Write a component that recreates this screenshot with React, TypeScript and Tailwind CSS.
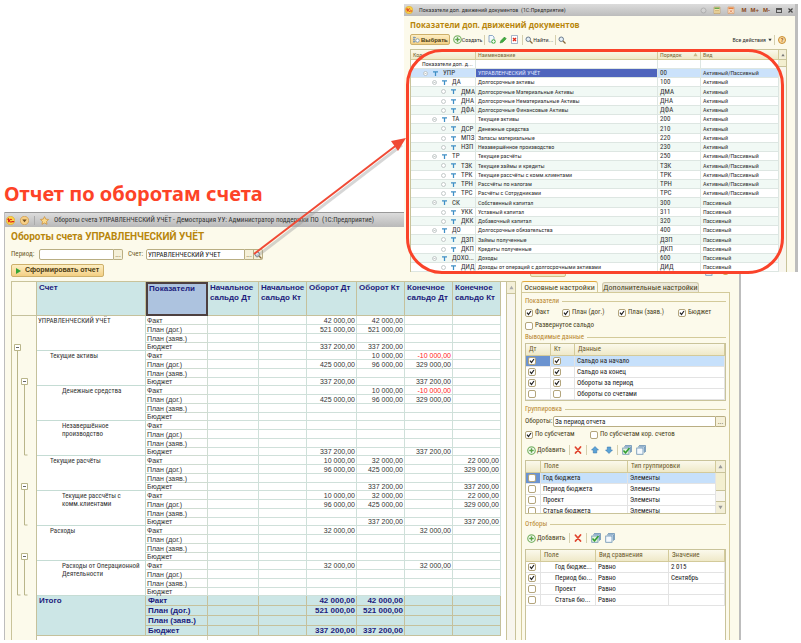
import type { ReactNode } from "react";

type Account = { name: string; pad: string; rows: string[][] };

const EMPTY = ["", "", "", ""];
const KINDS = ["Факт", "План (дог.)", "План (заяв.)", "Бюджет"];

// turnover debit, turnover credit, closing debit, closing credit
const accounts: Account[] = [
  {
    name: "УПРАВЛЕНЧЕСКИЙ УЧЁТ",
    pad: "pl-px",
    rows: [["42 000,00", "42 000,00", "", ""], ["521 000,00", "521 000,00", "", ""], EMPTY, ["337 200,00", "337 200,00", "", ""]],
  },
  {
    name: "Текущие активы",
    pad: "pl-[13px]",
    rows: [["", "10 000,00", "-10 000,00", ""], ["425 000,00", "96 000,00", "329 000,00", ""], EMPTY, ["337 200,00", "", "337 200,00", ""]],
  },
  {
    name: "Денежные средства",
    pad: "pl-[25px]",
    rows: [["", "10 000,00", "-10 000,00", ""], ["425 000,00", "96 000,00", "329 000,00", ""], EMPTY, EMPTY],
  },
  {
    name: "Незавершённое производство",
    pad: "pl-[25px] pr-8",
    rows: [EMPTY, EMPTY, EMPTY, ["337 200,00", "", "337 200,00", ""]],
  },
  {
    name: "Текущие расчёты",
    pad: "pl-[13px]",
    rows: [["10 000,00", "32 000,00", "", "22 000,00"], ["96 000,00", "425 000,00", "", "329 000,00"], EMPTY, ["", "337 200,00", "", "337 200,00"]],
  },
  {
    name: "Текущие рассчёты с комм.клиентами",
    pad: "pl-[25px] pr-4",
    rows: [["10 000,00", "32 000,00", "", "22 000,00"], ["96 000,00", "425 000,00", "", "329 000,00"], EMPTY, ["", "337 200,00", "", "337 200,00"]],
  },
  {
    name: "Расходы",
    pad: "pl-[13px]",
    rows: [["32 000,00", "", "32 000,00", ""], EMPTY, EMPTY, EMPTY],
  },
  {
    name: "Расходы от Операционной Деятельности",
    pad: "pl-[25px]",
    rows: [["32 000,00", "", "32 000,00", ""], EMPTY, EMPTY, EMPTY],
  },
];

const totals = [
  ["42 000,00", "42 000,00", "", ""],
  ["521 000,00", "521 000,00", "", ""],
  EMPTY,
  ["337 200,00", "337 200,00", "", ""],
];

const AP = "Активный/Пассивный";
const A = "Активный";
const P = "Пассивный";

const indicators: { level: number; code: string; name: string; order: string; kind: string }[] = [
  { level: 1, code: "УПР", name: "УПРАВЛЕНЧЕСКИЙ УЧЁТ", order: "00", kind: AP },
  { level: 2, code: "ДА", name: "Долгосрочные активы", order: "100", kind: A },
  { level: 3, code: "ДМА", name: "Долгосрочные Материальные Активы", order: "ДМА", kind: A },
  { level: 3, code: "ДНА", name: "Долгосрочные Нематериальные Активы", order: "ДНА", kind: A },
  { level: 3, code: "ДФА", name: "Долгосрочные Финансовые Активы", order: "ДФА", kind: A },
  { level: 2, code: "ТА", name: "Текущие активы", order: "200", kind: A },
  { level: 3, code: "ДСР", name: "Денежные средства", order: "210", kind: A },
  { level: 3, code: "МПЗ", name: "Запасы материальные", order: "220", kind: A },
  { level: 3, code: "НЗП", name: "Незавершённое производство", order: "230", kind: A },
  { level: 2, code: "ТР", name: "Текущие расчёты", order: "250", kind: AP },
  { level: 3, code: "ТЗК", name: "Текущие займы и кредиты", order: "ТЗК", kind: AP },
  { level: 3, code: "ТРК", name: "Текущие рассчёты с комм.клиентами", order: "ТРК", kind: AP },
  { level: 3, code: "ТРН", name: "Рассчёты по налогам", order: "ТРН", kind: AP },
  { level: 3, code: "ТРС", name: "Расчёты с Сотрудниками", order: "ТРС", kind: AP },
  { level: 2, code: "СК", name: "Собственный капитал", order: "300", kind: P },
  { level: 3, code: "УКК", name: "Уставный капитал", order: "311", kind: P },
  { level: 3, code: "ДКК", name: "Добавочный капитал", order: "320", kind: P },
  { level: 2, code: "ДО", name: "Долгосрочные обязательства", order: "400", kind: P },
  { level: 3, code: "ДЗП", name: "Займы полученные", order: "ДЗП", kind: P },
  { level: 3, code: "ДКП", name: "Кредиты полученные", order: "ДКП", kind: P },
  { level: 2, code: "ДОХО...", name: "Доходы", order: "600", kind: P },
  { level: 3, code: "ДИД", name: "Доходы от операций с долгосрочными активами", order: "ДИД", kind: P },
];

const LEVEL_PAD: Record<number, string> = { 1: "pl-3", 2: "pl-[21px]", 3: "pl-[30px]" };

function Logo({ className }: { className: string }) {
  return (
    <svg className={className} viewBox="0 0 16 16">
      <circle cx="8" cy="8" r="7.500" fill="#fbd24a" stroke="#d9a520" />
      <path d="M2.500 6.500 4.500 5v6M10.500 6.500a2.500 2.500 0 1 0 0 3.500h4" fill="none" stroke="#d9251c" strokeWidth="1.800" />
    </svg>
  );
}

function AddIcon() {
  return (
    <svg className="size-[9px] shrink-0" viewBox="0 0 18 18">
      <circle cx="9" cy="9" r="7.500" fill="#fff" stroke="#7fb56a" strokeWidth="2.500" />
      <path d="M9 4.500v9M4.500 9h9" stroke="#5aa346" strokeWidth="3" />
    </svg>
  );
}

function CrossIcon() {
  return (
    <svg className="size-[8px]" viewBox="0 0 16 16">
      <path d="M3 2.500 13 14M13 2 3 14" stroke="#e0452f" strokeWidth="3.500" strokeLinecap="round" />
    </svg>
  );
}

function ArrowIcon({ down = false }: { down?: boolean }) {
  return (
    <svg className={down ? "size-[8px] rotate-180" : "size-[8px]"} viewBox="0 0 16 16">
      <path d="M8 1 15 8h-3.500v6h-7V8H1z" fill="#5ba3d6" stroke="#2f6fa8" strokeWidth="1" />
    </svg>
  );
}

function StackIcon({ checked = false }: { checked?: boolean }) {
  return (
    <svg className="size-[10px]" viewBox="0 0 20 20">
      <path d="M6 1h13v13M4 3.500h13v12" fill="#dceaf6" stroke="#5f88ad" strokeWidth="1.500" />
      <rect x="1.500" y="6" width="12.500" height="12.500" fill={checked ? "#e4f4dc" : "#f4f9fd"} stroke="#5f88ad" strokeWidth="1.500" />
      {checked && <path d="m3 11 4 4.500L15 6" fill="none" stroke="#2f9e2f" strokeWidth="3" />}
    </svg>
  );
}

function SearchIcon() {
  return (
    <svg className="size-[8px] shrink-0" viewBox="0 0 16 16">
      <circle cx="6.500" cy="6.500" r="4.500" fill="#e3eef8" stroke="#6d7d8d" strokeWidth="2" />
      <path d="m10 10 5 5" stroke="#8a6a3a" strokeWidth="2.500" />
    </svg>
  );
}

function Separator() {
  return <span className="h-[10px] w-px shrink-0 bg-[#d5cfae]" />;
}

function Check({ checked = false, label, children }: { checked?: boolean; label?: string; children?: ReactNode }) {
  return (
    <label className="flex items-center gap-[2px] whitespace-nowrap">
      <span className="grid size-[8px] shrink-0 place-items-center">
        <input
          type="checkbox"
          defaultChecked={checked}
          aria-label={label}
          className="peer col-start-1 row-start-1 size-[8px] appearance-none rounded-[2px] border border-[#b3a57c] bg-white"
        />
        <svg className="pointer-events-none invisible col-start-1 row-start-1 size-[6px] peer-checked:visible" viewBox="0 0 12 12">
          <path d="m2 5 3 4 5-7" fill="none" stroke="#222" strokeWidth="2.500" />
        </svg>
      </span>
      {children}
    </label>
  );
}

function GroupTitle({ children }: { children: ReactNode }) {
  return (
    <div className="flex h-[10px] items-center gap-[3px]">
      <h3 className="text-[#b8862b]">{children}</h3>
      <span className="h-px flex-1 bg-[#d3ca9a]" />
    </div>
  );
}

function Triangle({ className }: { className: string }) {
  return (
    <svg className={className} viewBox="0 0 6 6">
      <path d="M3 1 5.500 5h-5z" fill="currentColor" />
    </svg>
  );
}

function Report() {
  const th = "border-r border-b border-[#c5c19c] bg-[#cce6e6] px-[2px] pt-px text-left align-top";
  return (
    <div className="flex min-w-0 flex-1 border border-b-0 border-[#c9c39a] bg-white">
      <div className="min-w-0 flex-1 pr-[5px]">
        <table className="w-full table-fixed border-separate border-spacing-0 font-['Liberation_Sans',sans-serif] text-[7px] leading-[7px] text-[#333]">
          <colgroup>
            <col className="w-[25px]" />
            <col className="w-[109px]" />
            <col className="w-[62px]" />
            <col className="w-[51px]" />
            <col className="w-[48px]" />
            <col className="w-[50px]" />
            <col className="w-[48px]" />
            <col className="w-[48px]" />
            <col />
          </colgroup>
          <thead>
            <tr className="h-[34px] text-[8px] leading-[10px] text-[#1c1c7c]">
              <td className="border-r border-b border-[#c5c19c] bg-[#fcfaeb]" />
              <th className={th}>Счет</th>
              <th className="border-2 border-[#4d4040] bg-[#adc3df] px-px text-left align-top">Показатели</th>
              <th className={th}>Начальное сальдо Дт</th>
              <th className={th}>Начальное сальдо Кт</th>
              <th className={th}>Оборот Дт</th>
              <th className={th}>Оборот Кт</th>
              <th className={th}>Конечное сальдо Дт</th>
              <th className={th}>Конечное сальдо Кт</th>
            </tr>
          </thead>
          <tbody>
            {accounts.map((account, a) =>
              account.rows.map((row, i) => (
                <tr key={`${a}-${i}`} className={i === 3 ? "h-[8px]" : "h-[9px]"}>
                  {a === 0 && i === 0 && (
                    <td rowSpan={37} className="border-r border-[#c5c19c] bg-[#fcfaeb] align-top">
                      <svg className="block h-[280px] w-[24px]" viewBox="0 0 24 280" fill="none" stroke="#b9b58a">
                        <path d="M5.500 34v245h3M12.500 68v71h3M12.500 173v36h3M12.500 243v36h3" />
                        <path d="M2.500 28.500h6v6h-6zM9.500 62.500h6v6h-6zM9.500 167.500h6v6h-6zM9.500 237.500h6v6h-6z" fill="#fff" />
                        <path d="M4 31.500h3M11 65.500h3M11 170.500h3M11 240.500h3" stroke="#666" />
                      </svg>
                    </td>
                  )}
                  {i === 0 && (
                    <td rowSpan={4} className={`border-r border-b border-[#c5dcd4] pt-px align-top font-['Roboto_Condensed','Liberation_Sans',sans-serif] leading-[8px] ${account.pad}`}>
                      {account.name}
                    </td>
                  )}
                  <td className="border-r border-b border-[#cfdcd2] pl-px">{KINDS[i]}</td>
                  <td className="border-r border-b border-[#cfe0da]" />
                  <td className="border-r border-b border-[#cfe0da]" />
                  {row.map((value, c) => (
                    <td
                      key={c}
                      className={`border-r border-b border-[#cfe0da] pr-px text-right whitespace-nowrap ${value.startsWith("-") ? "text-[#ff2020]" : ""}`}
                    >
                      {value}
                    </td>
                  ))}
                </tr>
              ))
            )}
            {totals.map((row, i) => (
              <tr key={i} className="h-[10px] bg-[#cce6e6] text-[8px] font-bold text-[#1c1c7c]">
                {i === 0 && (
                  <td rowSpan={4} className="border-r border-b border-[#c5c19c] pt-px pl-[2px] align-top">
                    Итого
                  </td>
                )}
                <td className="border-r border-b border-[#c5c19c] pl-[2px]">{KINDS[i]}</td>
                <td className="border-r border-b border-[#c5c19c]" />
                <td className="border-r border-b border-[#c5c19c]" />
                {row.map((value, c) => (
                  <td key={c} className="border-r border-b border-[#c5c19c] pr-px text-right whitespace-nowrap">
                    {value}
                  </td>
                ))}
              </tr>
            ))}
            <tr className="h-[4px]">
              <td colSpan={2} className="border-r border-[#d8d4bc]" />
              <td colSpan={6} />
            </tr>
          </tbody>
        </table>
      </div>
      <div className="w-[9px] shrink-0 border-l border-[#c9c39a] bg-[#f8f6ee]">
        <div className="flex h-[12px] items-center justify-center border-b border-[#c9c39a] bg-[#f3efd8] text-[#aaa]">
          <Triangle className="size-[5px]" />
        </div>
      </div>
    </div>
  );
}

const gridHead = "border-r border-b border-[#d3ca9a] bg-linear-to-b from-[#fbf9ec] to-[#efe9c8] px-[3px] text-left font-normal text-[#6b5a2a]";
const gridCell = "border-r border-b border-[#e3e3e3] px-[2px] whitespace-nowrap overflow-hidden";

function Settings() {
  return (
    <aside className="flex w-[209px] shrink-0 flex-col text-[7px] leading-[9px] text-[#4a4220]">
      <div className="flex h-[11px] items-end gap-1 text-[8px]">
        <button className="h-[11px] w-[77px] rounded-t-[3px] border border-b-0 border-[#d3ca9a] border-t-[#e2a93a] bg-[#fcfaeb] whitespace-nowrap">
          Основные настройки
        </button>
        <button className="h-[10px] w-[97px] rounded-t-[3px] border border-b-0 border-[#cfc9ab] bg-[#ebe8da] whitespace-nowrap">
          Дополнительные настройки
        </button>
      </div>
      <div className="flex flex-1 flex-col border-x border-t border-[#d3ca9a] px-[3px] pt-[3px]">
        <GroupTitle>Показатели</GroupTitle>
        <div className="grid h-[13px] grid-cols-[37px_56px_60px_1fr] items-center">
          <Check checked>Факт</Check>
          <Check checked>План (дог.)</Check>
          <Check checked>План (заяв.)</Check>
          <Check checked>Бюджет</Check>
        </div>
        <div className="flex h-[13px] items-center">
          <Check>Развернутое сальдо</Check>
        </div>
        <GroupTitle>Выводимые данные</GroupTitle>
        <table className="mt-px w-full table-fixed border-separate border-spacing-0 border border-[#c9c39a] bg-white text-[#222]">
          <colgroup>
            <col className="w-[25px]" />
            <col className="w-[24px]" />
            <col />
          </colgroup>
          <thead>
            <tr className="h-[12px]">
              <th className={gridHead}>Дт</th>
              <th className={gridHead}>Кт</th>
              <th className={gridHead}>Данные</th>
            </tr>
          </thead>
          <tbody>
            {["Сальдо на начало", "Сальдо на конец", "Обороты за период", "Обороты со счетами"].map((name, i) => (
              <tr key={name} className={i === 0 ? "h-[11px] bg-[#c6e0fb]" : "h-[11px]"}>
                <td className={i === 0 ? `${gridCell} bg-[#6b93d0]` : gridCell}>
                  <Check checked={i < 3} label={`Дт: ${name}`} />
                </td>
                <td className={gridCell}>
                  <Check checked={i < 3} label={`Кт: ${name}`} />
                </td>
                <td className={gridCell}>{name}</td>
              </tr>
            ))}
          </tbody>
        </table>

        <div className="pt-[3px]">
          <GroupTitle>Группировка</GroupTitle>
        </div>
        <div className="mt-[2px] flex h-[11px] items-center">
          <label htmlFor="turnover" className="w-[28px] whitespace-nowrap">Обороты:</label>
          <input
            id="turnover"
            defaultValue="За период отчета"
            className="h-[11px] min-w-0 flex-1 rounded-l-[2px] border border-[#b9ae83] bg-white px-px text-[#222]"
          />
          <button aria-label="Выбрать обороты" className="h-[11px] w-[10px] rounded-r-[2px] border border-l-0 border-[#b9ae83] bg-[#f5f0d8] leading-[6px]">
            ...
          </button>
        </div>
        <div className="grid h-[15px] grid-cols-[65px_1fr] items-center">
          <Check checked>По субсчетам</Check>
          <Check>По субсчетам кор. счетов</Check>
        </div>
        <div className="flex h-[16px] items-center gap-[4px] pl-[2px]">
          <button className="flex items-center gap-px"><AddIcon />Добавить</button>
          <Separator />
          <button aria-label="Удалить"><CrossIcon /></button>
          <Separator />
          <button aria-label="Вверх"><ArrowIcon /></button>
          <button aria-label="Вниз" className="pl-[2px]"><ArrowIcon down /></button>
          <Separator />
          <button aria-label="Установить флажки"><StackIcon checked /></button>
          <button aria-label="Снять флажки"><StackIcon /></button>
        </div>
        <div className="mt-[2px] flex h-[54px] overflow-hidden border border-[#c9c39a] bg-white">
          <div className="min-w-0 flex-1">
            <table className="w-full table-fixed border-separate border-spacing-0 text-[#222]">
              <colgroup>
                <col className="w-[15px]" />
                <col className="w-[87px]" />
                <col />
              </colgroup>
              <thead>
                <tr className="h-[12px]">
                  <th className={gridHead} />
                  <th className={gridHead}>Поле</th>
                  <th className={gridHead}>Тип группировки</th>
                </tr>
              </thead>
              <tbody>
                {["Год бюджета", "Период бюджета", "Проект", "Статья бюджета"].map((name, i) => (
                  <tr key={name} className={i === 0 ? "h-[11px] bg-[#c6e0fb]" : "h-[11px]"}>
                    <td className={i === 0 ? `${gridCell} bg-[#6b93d0]` : gridCell}>
                      <Check label={name} />
                    </td>
                    <td className={gridCell}>{name}</td>
                    <td className={gridCell}>Элементы</td>
                  </tr>
                ))}
              </tbody>
            </table>
          </div>
          <div className="flex w-[9px] shrink-0 flex-col bg-[#f8f6ee] text-[#999]">
            <span className="flex h-[12px] items-center justify-center border-b border-[#c9c39a] bg-[#f3efd8]">
              <Triangle className="size-[5px]" />
            </span>
            <span className="h-[18px] border-b border-[#c9c39a] bg-[#f3efd0]" />
            <span className="mt-auto flex h-[12px] items-center justify-center border-t border-[#c9c39a] bg-[#f3efd8]">
              <Triangle className="size-[5px] rotate-180" />
            </span>
          </div>
        </div>

        <div className="pt-[5px]">
          <GroupTitle>Отборы</GroupTitle>
        </div>
        <div className="mt-px flex h-[16px] items-center gap-[4px] pl-[2px]">
          <button className="flex items-center gap-px"><AddIcon />Добавить</button>
          <Separator />
          <button aria-label="Удалить"><CrossIcon /></button>
          <Separator />
          <button aria-label="Установить флажки"><StackIcon checked /></button>
          <button aria-label="Снять флажки"><StackIcon /></button>
        </div>
        <div className="mt-[3px] flex-1 border border-b-0 border-[#c9c39a] bg-white">
          <table className="w-full table-fixed border-separate border-spacing-0 text-[#222]">
            <colgroup>
              <col className="w-[15px]" />
              <col className="w-[55px]" />
              <col className="w-[73px]" />
              <col />
            </colgroup>
            <thead>
              <tr className="h-[12px]">
                <th className={gridHead} />
                <th className={gridHead}>Поле</th>
                <th className={gridHead}>Вид сравнения</th>
                <th className={gridHead}>Значение</th>
              </tr>
            </thead>
            <tbody>
              {[
                ["Год бюдже...", "2 015"],
                ["Период бю...", "Сентябрь"],
                ["Проект", ""],
                ["Статья бю...", ""],
              ].map(([name, value]) => (
                <tr key={name} className="h-[11px]">
                  <td className={gridCell}>
                    <Check checked={value !== ""} label={name} />
                  </td>
                  <td className="border-r border-b border-[#e3e3e3] pl-[14px] whitespace-nowrap">{name}</td>
                  <td className={gridCell}>Равно</td>
                  <td className={gridCell}>{value}</td>
                </tr>
              ))}
            </tbody>
          </table>
        </div>
      </div>
    </aside>
  );
}

function TurnoverWindow() {
  return (
    <main className="mr-[60px] ml-1 flex flex-1 flex-col border-r-2 border-l border-[#bdbdbd] bg-[#fcfaeb]">
      <header className="flex h-[15px] items-center gap-[5px] border-t border-[#999] bg-linear-to-b from-[#dcdcdc] to-[#b9b9b9] pl-px text-[7px] whitespace-nowrap text-[#333]">
        <Logo className="size-[9px]" />
        <svg className="size-[9px]" viewBox="0 0 16 16">
          <circle cx="8" cy="8" r="7.500" fill="#f6cf86" stroke="#c98f35" />
          <path d="M4 6h8l-4 5z" fill="#6b4a1a" />
        </svg>
        <span className="h-[9px] w-px bg-[#aaa]" />
        <svg className="size-[9px]" viewBox="0 0 16 16">
          <path d="m8 1 2.200 4.600 5 .7-3.600 3.500.9 5L8 12.400l-4.500 2.400.9-5L.8 6.300l5-.7z" fill="#fbd98a" stroke="#c98a2e" strokeWidth="1.200" />
        </svg>
        <span>
          Обороты счета УПРАВЛЕНЧЕСКИЙ УЧЁТ - Демострация УУ: Администратор поддержки ПО &nbsp;(1С:Предприятие)
        </span>
      </header>
      <div className="flex flex-1 flex-col pr-[9px] pl-[6px]">
        <h2 className="h-[22px] font-[Roboto,sans-serif] text-[10px] leading-[20px] font-bold whitespace-nowrap text-[#b8860b]">
          Обороты счета УПРАВЛЕНЧЕСКИЙ УЧЁТ
        </h2>
        <div className="flex h-[11px] items-center text-[7px] leading-[9px] text-[#6b5a2a]">
          <label htmlFor="period" className="w-[28px]">Период:</label>
          <input id="period" className="h-[11px] w-[75px] rounded-l-[2px] border border-[#b9ae83] bg-white px-px" />
          <button aria-label="Выбрать период" className="h-[11px] w-[9px] rounded-r-[2px] border border-l-0 border-[#b9ae83] bg-[#f5f0d8] leading-[6px]">
            ...
          </button>
          <label htmlFor="account" className="ml-[5px] w-[18px]">Счет:</label>
          <input
            id="account"
            defaultValue="УПРАВЛЕНЧЕСКИЙ УЧЁТ"
            className="h-[11px] w-[99px] rounded-l-[2px] border border-[#b9ae83] bg-white px-px text-[#222]"
          />
          <button aria-label="Выбрать счет" className="h-[11px] w-[9px] border border-l-0 border-[#b9ae83] bg-[#f5f0d8] leading-[6px]">
            ...
          </button>
          <button aria-label="Открыть счет" className="flex h-[11px] w-[9px] items-center justify-center rounded-r-[2px] border border-l-0 border-[#b9ae83] bg-[#f5f0d8]">
            <SearchIcon />
          </button>
        </div>
        <div className="mt-1 mb-1 flex h-[13px] justify-between">
          <button className="flex items-center gap-[3px] rounded-[2px] border border-[#cdb06a] bg-linear-to-b from-[#fdeec2] to-[#f3cf83] px-1 font-['Liberation_Sans',sans-serif] text-[7px] font-bold text-[#4a3a10]">
            <svg className="size-[6px]" viewBox="0 0 6 6">
              <path d="M0 0v6l5-3z" fill="#35a535" />
            </svg>
            Сформировать отчет
          </button>
          <div className="flex w-[200px] items-center gap-[6px]">
            <button aria-label="Выбрать вариант" className="mr-auto h-[13px] w-[36px] rounded-[2px] border border-[#cfc08a] bg-[#f1e9c4]" />
            <button aria-label="Настройки"><StackIcon /></button>
            <button aria-label="Справка" className="size-[9px] rounded-full border border-[#c98f35] bg-[#fbd9a0]" />
          </div>
        </div>
        <div className="flex flex-1 gap-[5px]">
          <Report />
          <Settings />
        </div>
      </div>
    </main>
  );
}

function IndicatorsWindow() {
  const head = "border-r border-b border-[#d3ca9a] bg-linear-to-b from-[#fbf9ec] to-[#efe9c8] px-[2px] text-left font-normal text-[#7a6a3a]";
  const cell = "overflow-hidden border-r border-b border-[#dde6e2] px-[2px] whitespace-nowrap";
  return (
    <section className="absolute top-1 right-[3px] left-[404px] border-r-[3px] border-[#bdbdbd] bg-[#fcfaeb] text-[6px] leading-[8px] text-[#333]">
      <header className="flex h-[12px] items-center gap-[6px] bg-linear-to-b from-[#dcdcdc] to-[#bcbcbc] px-px whitespace-nowrap">
        <Logo className="size-[8px]" />
        <span className="flex-1">Показатели доп. движений документов &nbsp;(1С:Предприятие)</span>
        <svg className="size-[7px] opacity-40" viewBox="0 0 14 14">
          <circle cx="7" cy="7" r="5" fill="#ddd" stroke="#888" strokeWidth="2" />
        </svg>
        <svg className="size-[8px]" viewBox="0 0 16 16">
          <path d="M2 2h12v13H2z" fill="#f3e3b0" stroke="#b98f4a" />
          <path d="M3 3h10v3H3z" fill="#6aa84f" />
          <path d="M4 9h8M4 12h8" stroke="#b98f4a" />
        </svg>
        <svg className="size-[8px]" viewBox="0 0 16 16">
          <path d="M2 2h12v13H2z" fill="#f9dcc0" stroke="#d98a4a" />
          <path d="M3 3h10v3H3z" fill="#e08040" />
          <path d="m5 8 6 5M11 8l-6 5" stroke="#d05a2a" />
        </svg>
        <span className="flex gap-1 font-['Liberation_Sans',sans-serif] font-bold text-[#8a4a1a]">
          <button>M</button>
          <button>M+</button>
          <button>M-</button>
        </span>
        <button aria-label="Развернуть" className="h-[5px] w-[6px] border border-t-2 border-[#555]" />
        <button aria-label="Закрыть" className="pr-px">
          <svg className="size-[5px]" viewBox="0 0 5 5">
            <path d="m.5.5 4 4m0-4-4 4" stroke="#444" strokeWidth="1.200" />
          </svg>
        </button>
      </header>
      <div className="pr-[8px] pl-[6px]">
        <h2 className="h-[18px] font-['Open_Sans',sans-serif] text-[8px] leading-[17px] font-bold whitespace-nowrap text-[#b8860b]">
          Показатели доп. движений документов
        </h2>
        <div className="flex h-[11px] items-center gap-[2px] whitespace-nowrap">
          <button className="mr-px flex h-[11px] items-center gap-px rounded-[2px] border border-[#cdb06a] bg-linear-to-b from-[#fdeec2] to-[#f3cf83] px-px font-['Liberation_Sans',sans-serif] font-bold text-[#4a3a10]">
            <svg className="size-[8px]" viewBox="0 0 16 16">
              <path d="M2 3h6M2 7h4M2 11h5M4 1v13" stroke="#6b8fb5" strokeWidth="1.500" />
              <circle cx="11" cy="9" r="3.500" fill="#fff" stroke="#6b8fb5" strokeWidth="1.500" />
            </svg>
            Выбрать
          </button>
          <button className="flex items-center"><AddIcon />Создать</button>
          <Separator />
          <button aria-label="Скопировать">
            <svg className="size-[9px]" viewBox="0 0 18 18">
              <path d="M4 1h7l3 3v10H4z" fill="#f4f9fd" stroke="#6b8fb5" strokeWidth="1.500" />
              <circle cx="13" cy="13" r="4.500" fill="#5cb85c" />
              <path d="M13 10v6M10 13h6" stroke="#fff" strokeWidth="1.500" />
            </svg>
          </button>
          <button aria-label="Изменить" className="px-px">
            <svg className="size-[8px]" viewBox="0 0 16 16">
              <path d="M2 14 4 9l7-7 3.500 3.500-7 7z" fill="#3fae3f" stroke="#2a7a2a" />
            </svg>
          </button>
          <button aria-label="Пометить на удаление" className="pr-px">
            <svg className="size-[9px]" viewBox="0 0 18 18">
              <path d="M3 1h12v16H3z" fill="#fff" stroke="#8a9db5" strokeWidth="1.500" />
              <path d="m6 6 6 6M12 6l-6 6" stroke="#e02a1a" strokeWidth="2.800" />
            </svg>
          </button>
          <Separator />
          <button className="flex items-center"><SearchIcon />Найти...</button>
          <Separator />
          <button aria-label="Отменить поиск"><SearchIcon /></button>
          <button className="ml-auto flex items-center gap-[2px]">
            Все действия
            <Triangle className="size-[4px] rotate-180" />
          </button>
          <Separator />
          <button aria-label="Справка" className="mx-px flex size-[8px] items-center justify-center rounded-full border border-[#c98f35] bg-[#fbd9a0] font-bold text-[#a0601a]">
            ?
          </button>
        </div>
        <div className="mt-1 flex border border-b-0 border-[#c9c39a] bg-white">
          <div className="min-w-0 flex-1">
            <table className="w-full table-fixed border-separate border-spacing-0">
              <colgroup>
                <col className="w-[65px]" />
                <col />
                <col className="w-[43px]" />
                <col className="w-[78px]" />
              </colgroup>
              <thead>
                <tr className="h-[10px]">
                  <th className={head}>Код</th>
                  <th className={head}>Наименование</th>
                  <th className={head}>
                    <span className="flex items-center justify-between">
                      Порядок
                      <Triangle className="size-[5px] text-[#c9b98a]" />
                    </span>
                  </th>
                  <th className={head}>Вид</th>
                </tr>
              </thead>
              <tbody>
                <tr className="h-[9px]">
                  <td className="border-r border-b border-[#dde6e2] pl-[11px] whitespace-nowrap">Показатели доп. д...</td>
                  <td className={cell} />
                  <td className={cell} />
                  <td className={cell} />
                </tr>
                {indicators.map((item, i) => (
                  <tr key={item.code} className={`h-[9px] nth-[4n]:h-[10px] ${i === 0 ? "bg-[#cbe2fb]" : i % 2 === 0 ? "bg-[#f1f9f5]" : ""}`}>
                    <td className="border-r border-b border-[#dde6e2] text-[7px] whitespace-nowrap">
                      <span className={`flex items-center ${LEVEL_PAD[item.level]}`}>
                        <svg className="size-[5px] shrink-0" viewBox="0 0 10 10" fill="#fff" stroke="#b0b8b8" strokeWidth="1.500">
                          <circle cx="5" cy="5" r="4" />
                          {item.level < 3 && <path d="M3 5h4" />}
                        </svg>
                        <svg className="mx-[5px] size-[5px] shrink-0" viewBox="0 0 10 10">
                          <path d="M0 1.500h10M5 1v9" stroke="#3f8fc5" strokeWidth="2.500" />
                        </svg>
                        {item.code}
                      </span>
                    </td>
                    <td className={i === 0 ? `${cell} bg-[#4f65bd] text-[#dfe6ff]` : cell}>{item.name}</td>
                    <td className={`${cell} text-[7px]`}>{item.order}</td>
                    <td className={cell}>{item.kind}</td>
                  </tr>
                ))}
              </tbody>
            </table>
          </div>
          <div className="w-[7px] shrink-0 bg-[#f8f6ee] text-[#777]">
            <span className="flex h-[10px] items-center justify-center border-b border-[#c9c39a] bg-[#f3efd8]">
              <Triangle className="size-[4px]" />
            </span>
            <span className="block h-[7px] border-b border-[#c9c39a] bg-[#f3efd0]" />
          </div>
        </div>
      </div>
      {/* highlight frame around the list */}
      <div className="pointer-events-none absolute top-[45px] right-[11px] -bottom-[2px] left-[2px] rounded-[36px] border-3 border-[#fa432a]" />
    </section>
  );
}

export default function App() {
  return (
    <div className="relative flex min-h-screen flex-col bg-white pb-[3px] font-['Roboto_Condensed','Liberation_Sans',sans-serif]">
      <h1 className="pt-[182px] pb-[6px] pl-1 font-['Noto_Sans',sans-serif] text-[20px] leading-[24px] font-bold text-[#fd4327]">
        Отчет по оборотам счета
      </h1>
      <TurnoverWindow />
      <IndicatorsWindow />
      <svg className="pointer-events-none absolute top-[130px] left-[250px] h-[132px] w-[162px]" viewBox="0 0 162 132">
        <path d="M6 127 152 15" stroke="#999" strokeOpacity=".4" strokeWidth="3" />
        <path d="M4 124 148 14" stroke="#f04a35" strokeWidth="2" />
        <path d="m156 8-15 3 7 10z" fill="#f04a35" />
      </svg>
    </div>
  );
}
